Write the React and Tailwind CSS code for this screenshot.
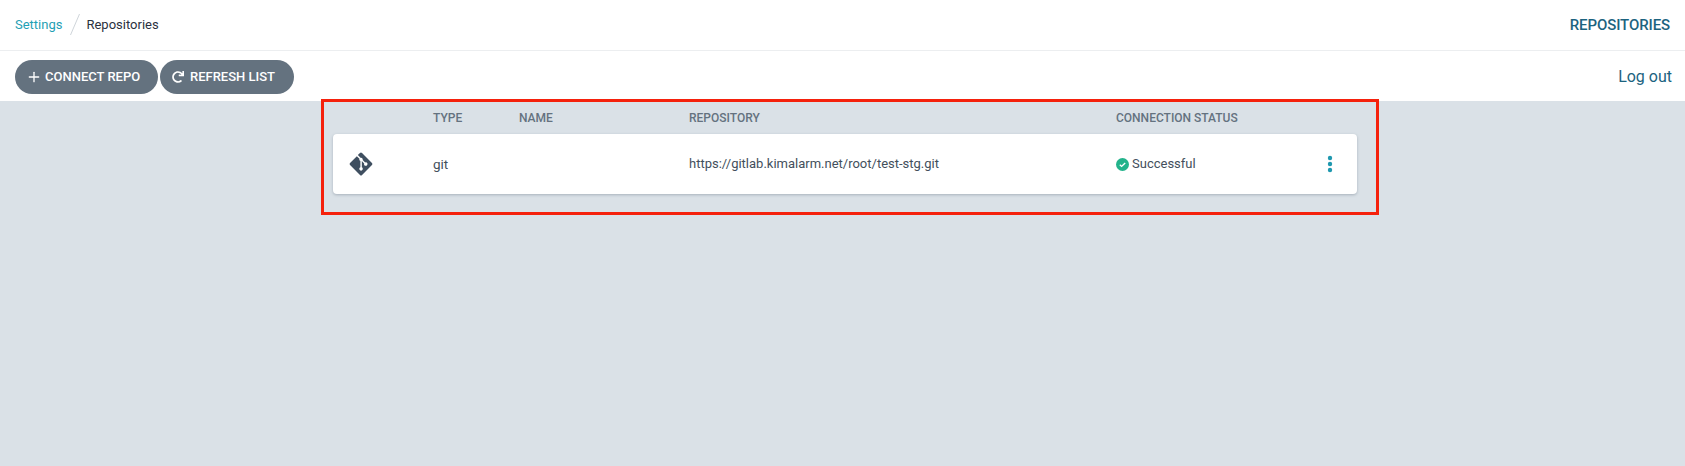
import React from "react";
import { FaGitAlt, FaRedo } from "react-icons/fa";
import { LuPlus } from "react-icons/lu";

function ToolbarButton({ icon, label, className }) {
  return (
    <button className={`flex h-[34px] items-center rounded-[17px] bg-[#64727f] pl-[12px] text-[13px] font-medium text-white ${className}`}>
      {icon}
      <span>{label}</span>
    </button>
  );
}

export default function App() {
  return (
    <div className="relative flex h-[466px] flex-col bg-[#dae1e7] font-['Roboto',sans-serif]">
      <header className="flex h-[51px] items-center justify-between border-b border-[#eceef0] bg-white pl-[15px] pr-[15px]">
        <nav className="flex items-center text-[13px]">
          <span className="text-[#1fa0b4]">Settings</span>
          <svg width="12" height="24" viewBox="0 0 12 24" className="ml-[7px] mr-[5px]">
            <line x1="10.5" y1="1" x2="1.5" y2="22" stroke="#cfd5da" strokeWidth="1" />
          </svg>
          <span className="text-[#2b3140]">Repositories</span>
        </nav>
        <div className="text-[15px] font-medium tracking-[-0.1px] text-[#1c637f]">REPOSITORIES</div>
      </header>

      <div className="flex h-[50px] items-center justify-between bg-white pl-[15px] pr-[13px] pt-[1px]">
        <div className="flex gap-[2px]">
          <ToolbarButton className="w-[143px]" label="CONNECT REPO" icon={<LuPlus size={16} strokeWidth={2} className="mr-[3px] -ml-[1px]" />} />
          <ToolbarButton className="w-[134px]" label="REFRESH LIST" icon={<FaRedo size={12} className="mr-[6px]" />} />
        </div>
        <a className="text-[16px] text-[#1c637f]">Log out</a>
      </div>

      <main className="ml-[333px] w-[1024px]">
        <div className="grid h-[33px] grid-cols-[100px_86px_170px_427px_1fr] items-center text-[12px] font-medium text-[#64727f]">
          <span />
          <span>TYPE</span>
          <span>NAME</span>
          <span>REPOSITORY</span>
          <span>CONNECTION STATUS</span>
        </div>
        <div className="grid h-[60px] grid-cols-[100px_86px_170px_427px_1fr] items-center rounded-[4px] bg-white text-[13px] text-[#434f5c] shadow-[0_1px_3px_rgba(74,90,105,0.35)]">
          <span className="pl-[15px]">
            <FaGitAlt size={26} className="text-[#3f4f60]" />
          </span>
          <span className="text-[13.5px]">git</span>
          <span />
          <span>https://gitlab.kimalarm.net/root/test-stg.git</span>
          <div className="flex items-center justify-between pr-[24px]">
            <span className="flex items-center gap-[3px]">
              <svg width="13" height="13" viewBox="0 0 13 13">
                <circle cx="6.5" cy="6.5" r="6.5" fill="#23b38b" />
                <path d="M3.8 6.8 L5.6 8.4 L9.2 4.9" fill="none" stroke="#fff" strokeWidth="1.4" />
              </svg>
              <span>Successful</span>
            </span>
            <svg width="6" height="18" viewBox="0 0 6 18">
              <circle cx="3" cy="3" r="2.2" fill="#1f98af" />
              <circle cx="3" cy="9" r="2.2" fill="#1f98af" />
              <circle cx="3" cy="15" r="2.2" fill="#1f98af" />
            </svg>
          </div>
        </div>
      </main>

      <div className="pointer-events-none absolute left-[321px] top-[99px] h-[116px] w-[1058px] border-[3px] border-[#f5210c]" />
    </div>
  );
}
